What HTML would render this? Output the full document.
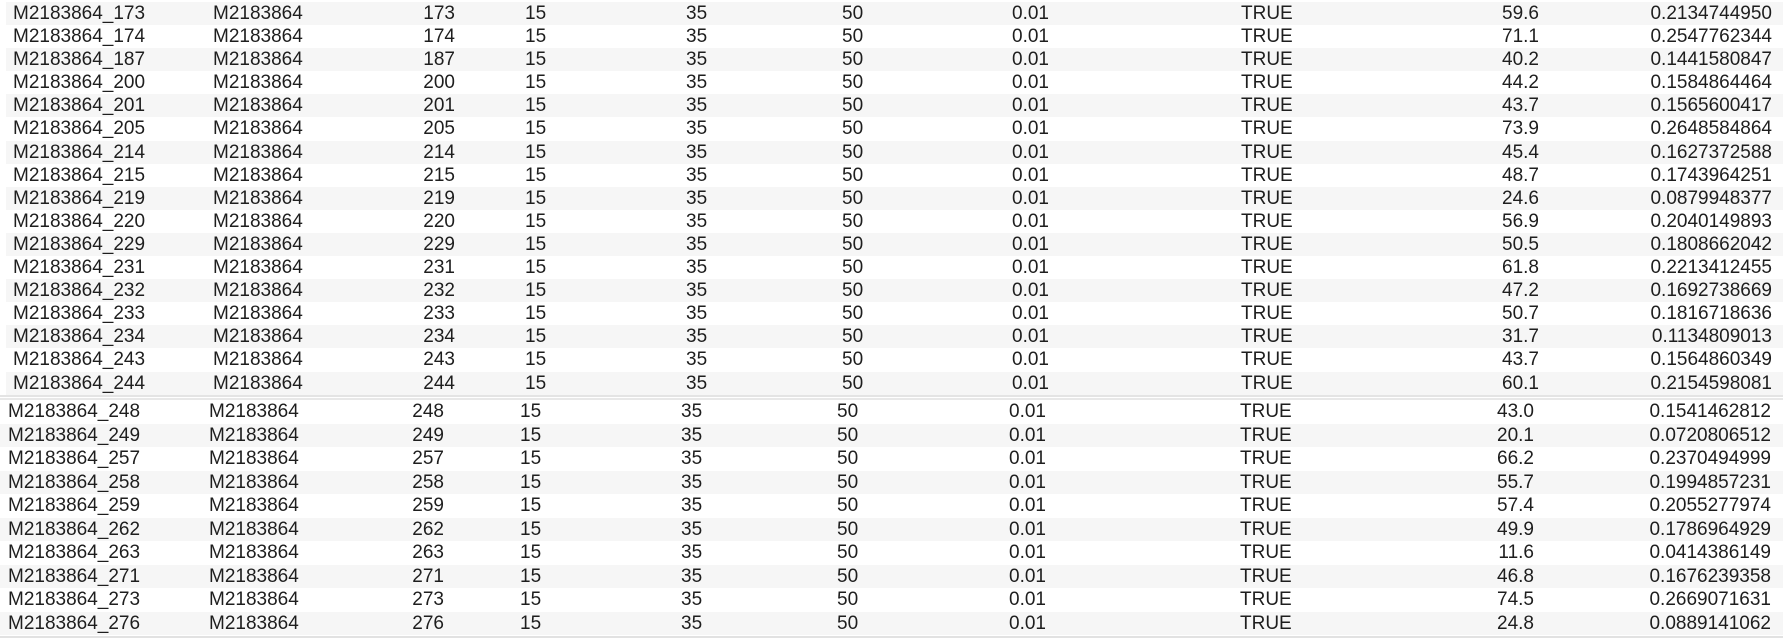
<!DOCTYPE html>
<html><head><meta charset="utf-8">
<style>
*{margin:0;padding:0;box-sizing:border-box}
body{width:1783px;height:642px;background:#fff;position:relative;overflow:hidden;font-family:"Liberation Sans",sans-serif;font-size:19px;color:#1e1e1e}
.sec{position:absolute;left:0;width:1783px}
.top{top:2px;left:6px;width:1777px}
.bot{top:400px}
.r{position:relative;height:23.1px;line-height:23.1px;white-space:nowrap}
.bot .r{height:23.5px;line-height:23.5px}
.r:nth-child(odd){background:#f6f6f6}
.bot .r:nth-child(odd){background:#fff}
.bot .r:nth-child(even){background:#f6f6f6}
.r span{position:absolute;top:0}
.top .a{left:7px}.top .b{left:207px}.top .c{right:1328px}.top .d{left:519px}.top .e{left:680px}.top .f{left:836px}.top .g{left:1006px}.top .h{left:1235px}.top .i{right:244px}.top .j{right:11px}
.bot .a{left:8px}.bot .b{left:209px}.bot .c{right:1339px}.bot .d{left:520px}.bot .e{left:681px}.bot .f{left:837px}.bot .g{left:1009px}.bot .h{left:1240px}.bot .i{right:249px}.bot .j{right:12px}
.sep{position:absolute;left:0;top:395px;width:1783px;height:5px;border-top:2px solid #e4e4e4;border-bottom:2px solid #e8e8e8}
.bl{position:absolute;left:0;top:636px;width:1783px;height:2px;background:#e2e2e2}
</style></head><body>
<div class="sec top">
<div class="r"><span class="a">M2183864_173</span><span class="b">M2183864</span><span class="c">173</span><span class="d">15</span><span class="e">35</span><span class="f">50</span><span class="g">0.01</span><span class="h">TRUE</span><span class="i">59.6</span><span class="j">0.2134744950</span></div>
<div class="r"><span class="a">M2183864_174</span><span class="b">M2183864</span><span class="c">174</span><span class="d">15</span><span class="e">35</span><span class="f">50</span><span class="g">0.01</span><span class="h">TRUE</span><span class="i">71.1</span><span class="j">0.2547762344</span></div>
<div class="r"><span class="a">M2183864_187</span><span class="b">M2183864</span><span class="c">187</span><span class="d">15</span><span class="e">35</span><span class="f">50</span><span class="g">0.01</span><span class="h">TRUE</span><span class="i">40.2</span><span class="j">0.1441580847</span></div>
<div class="r"><span class="a">M2183864_200</span><span class="b">M2183864</span><span class="c">200</span><span class="d">15</span><span class="e">35</span><span class="f">50</span><span class="g">0.01</span><span class="h">TRUE</span><span class="i">44.2</span><span class="j">0.1584864464</span></div>
<div class="r"><span class="a">M2183864_201</span><span class="b">M2183864</span><span class="c">201</span><span class="d">15</span><span class="e">35</span><span class="f">50</span><span class="g">0.01</span><span class="h">TRUE</span><span class="i">43.7</span><span class="j">0.1565600417</span></div>
<div class="r"><span class="a">M2183864_205</span><span class="b">M2183864</span><span class="c">205</span><span class="d">15</span><span class="e">35</span><span class="f">50</span><span class="g">0.01</span><span class="h">TRUE</span><span class="i">73.9</span><span class="j">0.2648584864</span></div>
<div class="r"><span class="a">M2183864_214</span><span class="b">M2183864</span><span class="c">214</span><span class="d">15</span><span class="e">35</span><span class="f">50</span><span class="g">0.01</span><span class="h">TRUE</span><span class="i">45.4</span><span class="j">0.1627372588</span></div>
<div class="r"><span class="a">M2183864_215</span><span class="b">M2183864</span><span class="c">215</span><span class="d">15</span><span class="e">35</span><span class="f">50</span><span class="g">0.01</span><span class="h">TRUE</span><span class="i">48.7</span><span class="j">0.1743964251</span></div>
<div class="r"><span class="a">M2183864_219</span><span class="b">M2183864</span><span class="c">219</span><span class="d">15</span><span class="e">35</span><span class="f">50</span><span class="g">0.01</span><span class="h">TRUE</span><span class="i">24.6</span><span class="j">0.0879948377</span></div>
<div class="r"><span class="a">M2183864_220</span><span class="b">M2183864</span><span class="c">220</span><span class="d">15</span><span class="e">35</span><span class="f">50</span><span class="g">0.01</span><span class="h">TRUE</span><span class="i">56.9</span><span class="j">0.2040149893</span></div>
<div class="r"><span class="a">M2183864_229</span><span class="b">M2183864</span><span class="c">229</span><span class="d">15</span><span class="e">35</span><span class="f">50</span><span class="g">0.01</span><span class="h">TRUE</span><span class="i">50.5</span><span class="j">0.1808662042</span></div>
<div class="r"><span class="a">M2183864_231</span><span class="b">M2183864</span><span class="c">231</span><span class="d">15</span><span class="e">35</span><span class="f">50</span><span class="g">0.01</span><span class="h">TRUE</span><span class="i">61.8</span><span class="j">0.2213412455</span></div>
<div class="r"><span class="a">M2183864_232</span><span class="b">M2183864</span><span class="c">232</span><span class="d">15</span><span class="e">35</span><span class="f">50</span><span class="g">0.01</span><span class="h">TRUE</span><span class="i">47.2</span><span class="j">0.1692738669</span></div>
<div class="r"><span class="a">M2183864_233</span><span class="b">M2183864</span><span class="c">233</span><span class="d">15</span><span class="e">35</span><span class="f">50</span><span class="g">0.01</span><span class="h">TRUE</span><span class="i">50.7</span><span class="j">0.1816718636</span></div>
<div class="r"><span class="a">M2183864_234</span><span class="b">M2183864</span><span class="c">234</span><span class="d">15</span><span class="e">35</span><span class="f">50</span><span class="g">0.01</span><span class="h">TRUE</span><span class="i">31.7</span><span class="j">0.1134809013</span></div>
<div class="r"><span class="a">M2183864_243</span><span class="b">M2183864</span><span class="c">243</span><span class="d">15</span><span class="e">35</span><span class="f">50</span><span class="g">0.01</span><span class="h">TRUE</span><span class="i">43.7</span><span class="j">0.1564860349</span></div>
<div class="r"><span class="a">M2183864_244</span><span class="b">M2183864</span><span class="c">244</span><span class="d">15</span><span class="e">35</span><span class="f">50</span><span class="g">0.01</span><span class="h">TRUE</span><span class="i">60.1</span><span class="j">0.2154598081</span></div>
</div>
<div class="sep"></div>
<div class="sec bot">
<div class="r"><span class="a">M2183864_248</span><span class="b">M2183864</span><span class="c">248</span><span class="d">15</span><span class="e">35</span><span class="f">50</span><span class="g">0.01</span><span class="h">TRUE</span><span class="i">43.0</span><span class="j">0.1541462812</span></div>
<div class="r"><span class="a">M2183864_249</span><span class="b">M2183864</span><span class="c">249</span><span class="d">15</span><span class="e">35</span><span class="f">50</span><span class="g">0.01</span><span class="h">TRUE</span><span class="i">20.1</span><span class="j">0.0720806512</span></div>
<div class="r"><span class="a">M2183864_257</span><span class="b">M2183864</span><span class="c">257</span><span class="d">15</span><span class="e">35</span><span class="f">50</span><span class="g">0.01</span><span class="h">TRUE</span><span class="i">66.2</span><span class="j">0.2370494999</span></div>
<div class="r"><span class="a">M2183864_258</span><span class="b">M2183864</span><span class="c">258</span><span class="d">15</span><span class="e">35</span><span class="f">50</span><span class="g">0.01</span><span class="h">TRUE</span><span class="i">55.7</span><span class="j">0.1994857231</span></div>
<div class="r"><span class="a">M2183864_259</span><span class="b">M2183864</span><span class="c">259</span><span class="d">15</span><span class="e">35</span><span class="f">50</span><span class="g">0.01</span><span class="h">TRUE</span><span class="i">57.4</span><span class="j">0.2055277974</span></div>
<div class="r"><span class="a">M2183864_262</span><span class="b">M2183864</span><span class="c">262</span><span class="d">15</span><span class="e">35</span><span class="f">50</span><span class="g">0.01</span><span class="h">TRUE</span><span class="i">49.9</span><span class="j">0.1786964929</span></div>
<div class="r"><span class="a">M2183864_263</span><span class="b">M2183864</span><span class="c">263</span><span class="d">15</span><span class="e">35</span><span class="f">50</span><span class="g">0.01</span><span class="h">TRUE</span><span class="i">11.6</span><span class="j">0.0414386149</span></div>
<div class="r"><span class="a">M2183864_271</span><span class="b">M2183864</span><span class="c">271</span><span class="d">15</span><span class="e">35</span><span class="f">50</span><span class="g">0.01</span><span class="h">TRUE</span><span class="i">46.8</span><span class="j">0.1676239358</span></div>
<div class="r"><span class="a">M2183864_273</span><span class="b">M2183864</span><span class="c">273</span><span class="d">15</span><span class="e">35</span><span class="f">50</span><span class="g">0.01</span><span class="h">TRUE</span><span class="i">74.5</span><span class="j">0.2669071631</span></div>
<div class="r"><span class="a">M2183864_276</span><span class="b">M2183864</span><span class="c">276</span><span class="d">15</span><span class="e">35</span><span class="f">50</span><span class="g">0.01</span><span class="h">TRUE</span><span class="i">24.8</span><span class="j">0.0889141062</span></div>
</div>
<div class="bl"></div>
</body></html>
